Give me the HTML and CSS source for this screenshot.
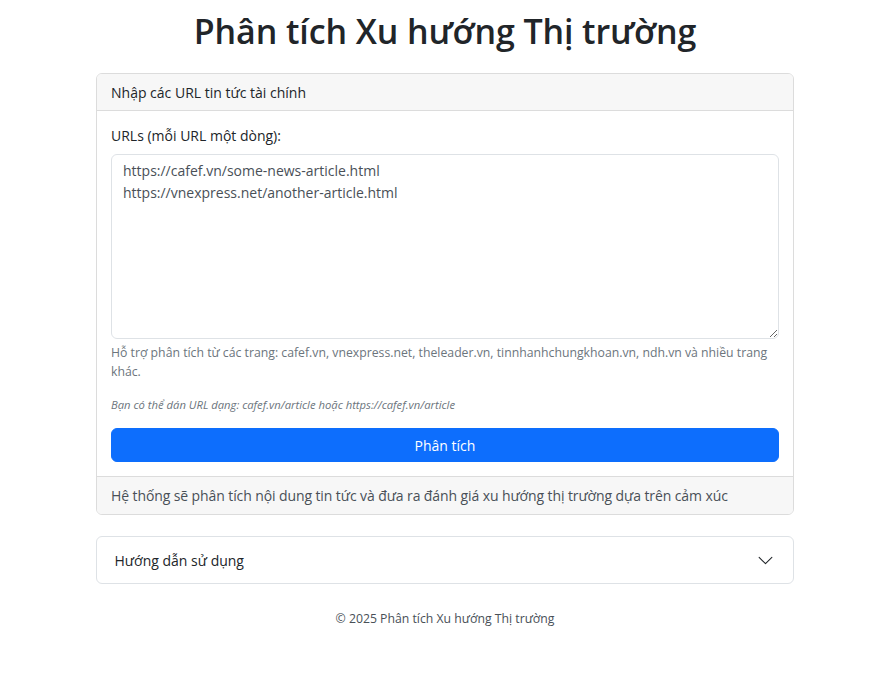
FILE: index.html
```html
<!DOCTYPE html>
<html lang="vi">
<head>
<meta charset="utf-8">
<title>Phân tích Xu hướng Thị trường</title>
<link rel="stylesheet" href="styles.css">
</head>
<body>
<div class="container">
  <h1 class="title">Phân tích Xu hướng Thị trường</h1>
  <div class="card">
    <div class="card-header">Nhập các URL tin tức tài chính</div>
    <div class="card-body">
      <label class="form-label" for="urls">URLs (mỗi URL một dòng):</label>
      <textarea id="urls" class="form-control">https://cafef.vn/some-news-article.html
https://vnexpress.net/another-article.html</textarea>
      <div class="form-text">Hỗ trợ phân tích từ các trang: cafef.vn, vnexpress.net, theleader.vn, tinnhanhchungkhoan.vn, ndh.vn và nhiều trang khác.</div>
      <p class="hint">Bạn có thể dán URL dạng: cafef.vn/article hoặc https://cafef.vn/article</p>
      <button class="btn-primary" type="button">Phân tích</button>
    </div>
    <div class="card-footer">Hệ thống sẽ phân tích nội dung tin tức và đưa ra đánh giá xu hướng thị trường dựa trên cảm xúc</div>
  </div>
  <div class="accordion">
    <button class="accordion-button" type="button">
      <span>Hướng dẫn sử dụng</span>
      <svg class="chevron" viewBox="0 0 16 16" fill="none" stroke="#212529" stroke-width="1" stroke-linecap="round" stroke-linejoin="round"><path d="M2 5L8 11L14 5"/></svg>
    </button>
  </div>
  <footer class="site-footer">© 2025 Phân tích Xu hướng Thị trường</footer>
</div>
</body>
</html>
```
FILE: styles.css
```css
* { box-sizing: border-box; }
body {
  margin: 0;
  font-family: "Open Sans", "Noto Sans", sans-serif;
  font-size: 14px;
  line-height: 21px;
  color: #212529;
  background: #fff;
}
.container {
  width: 698px;
  margin: 0 auto;
  padding-top: 10px;
}
.title {
  margin: 0 0 21px;
  font-size: 34px;
  line-height: 42px;
  font-weight: 600;
  letter-spacing: -0.1px;
  text-align: center;
}
.card {
  border: 1px solid #dcdcdc;
  border-radius: 6px;
  overflow: hidden;
}
.card-header {
  padding: 7.5px 14px;
  background: #f7f7f7;
  border-bottom: 1px solid #dcdcdc;
}
.card-body {
  padding: 14px;
  display: flex;
  flex-direction: column;
}
.form-label {
  margin-bottom: 8px;
}
.form-control {
  height: 185px;
  padding: 5px 11px;
  font: inherit;
  line-height: 22px;
  color: #495057;
  border: 1px solid #dee2e6;
  border-radius: 6px;
  resize: vertical;
}
.form-text {
  margin-top: 4px;
  font-size: 12.25px;
  line-height: 19px;
  color: #6c757d;
}
.hint {
  margin: 16px 0 15px;
  font-size: 11.25px;
  line-height: 16px;
  font-style: italic;
  color: #6c757d;
}
.btn-primary {
  height: 34px;
  width: 100%;
  font: inherit;
  color: #fff;
  background: #0d6efd;
  border: 1px solid #0d6efd;
  border-radius: 6px;
}
.card-footer {
  padding: 7.5px 14px 8px;
  background: #f7f7f7;
  border-top: 1px solid #dcdcdc;
  color: #495057;
  letter-spacing: -0.1px;
}
.accordion {
  margin-top: 21px;
  border: 1px solid #dee2e6;
  border-radius: 6px;
}
.accordion-button {
  width: 100%;
  display: flex;
  align-items: center;
  justify-content: space-between;
  padding: 13px 19px 12px 17.5px;
  font: inherit;
  color: #212529;
  background: transparent;
  border: 0;
  text-align: left;
}
.chevron {
  width: 17px;
  height: 17px;
}
.site-footer {
  margin-top: 26px;
  text-align: center;
  font-size: 12.25px;
  line-height: 18px;
  color: #495057;
}
```
